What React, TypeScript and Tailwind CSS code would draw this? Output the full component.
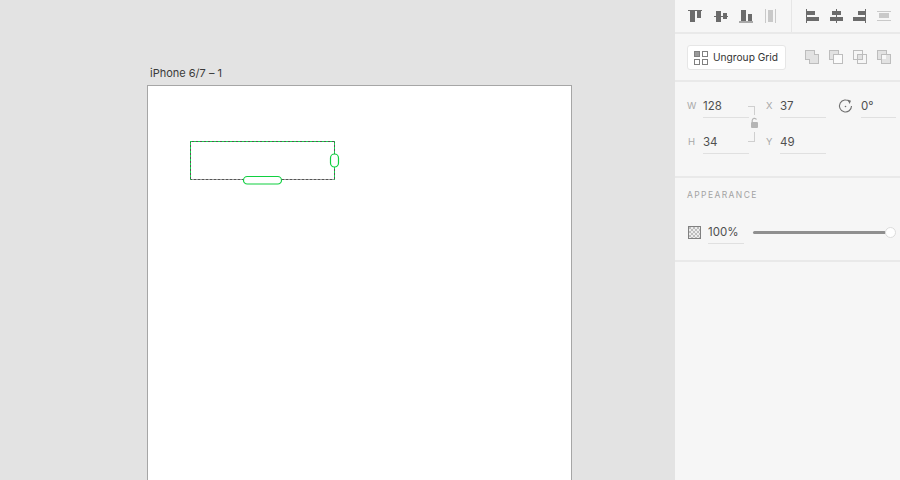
import React from "react";

const dark = "#6b6b6b";
const light = "#c9c9c9";

function AlignIcon({ children }: { children: React.ReactNode }) {
  return (
    <svg width="24" height="32" viewBox="0 0 24 32" className="shrink-0" shapeRendering="crispEdges">
      {children}
    </svg>
  );
}

function BoolIcon({ children }: { children: React.ReactNode }) {
  return (
    <svg width="15" height="15" viewBox="0 0 15 15" className="shrink-0" shapeRendering="crispEdges">
      {children}
    </svg>
  );
}

function Field({ value, width, className = "" }: { value: string; width: string; className?: string }) {
  return (
    <div className={`${width} h-[25px] border-b border-[#e0e0e0] text-[11.5px] leading-[26px] text-[#4f4f4f] ${className}`}>
      {value}
    </div>
  );
}

export default function App() {
  return (
    <div className="flex h-[480px] w-[900px] overflow-hidden font-['Inter','Liberation_Sans',sans-serif]">
      {/* Canvas */}
      <div className="h-full w-[675px] shrink-0 bg-[#e3e3e3] pl-[147px] pt-[66px]">
        <div className="pl-[3px] text-[11px] leading-[14px] text-[#3a3a3a]">iPhone 6/7 – 1</div>
        <div className="relative mt-[5px] h-[420px] w-[425px] border border-[#a6a6a6] bg-white">
          <svg className="absolute left-[36px] top-[49px]" width="160" height="50" viewBox="0 0 160 50" shapeRendering="crispEdges">
            <rect x="6.5" y="6.5" width="144" height="38" fill="none" stroke="#555555" />
            <line x1="6" y1="6.5" x2="151" y2="6.5" stroke="#14d84a" strokeDasharray="2 2" />
            <line x1="6.5" y1="8" x2="6.5" y2="45" stroke="#14d84a" strokeDasharray="2 2" />
            <line x1="150.5" y1="8" x2="150.5" y2="45" stroke="#14d84a" strokeDasharray="2 2" />
            <line x1="8" y1="44.5" x2="150" y2="44.5" stroke="#9a9a9a" strokeDasharray="2 2" />
            <rect x="59.5" y="41.5" width="38" height="7.5" rx="3.75" fill="#fff" stroke="#10d040" shapeRendering="auto" strokeWidth="1.2" />
            <rect x="146.5" y="19" width="8" height="13" rx="4" fill="#fff" stroke="#10d040" shapeRendering="auto" strokeWidth="1.2" />
          </svg>
        </div>
      </div>

      {/* Inspector */}
      <div className="flex h-full w-[225px] shrink-0 flex-col bg-[#f6f6f6] bg-[radial-gradient(#fcfcfc_0.6px,transparent_0.6px)] bg-[length:4px_4px]">
        {/* Align row */}
        <div className="flex h-[34px] shrink-0 items-start border-b-2 border-[#e9e9e9] pl-[8px]">
          <AlignIcon>
            <rect x="5" y="10" width="14" height="1" fill={dark} />
            <rect x="7" y="11" width="5" height="11" fill={dark} />
            <rect x="14" y="11" width="4" height="7" fill={dark} />
          </AlignIcon>
          <div className="ml-[2px]">
            <AlignIcon>
              <rect x="5" y="16" width="14" height="1" fill={dark} />
              <rect x="7" y="11" width="5" height="11" fill={dark} />
              <rect x="14" y="13" width="4" height="6" fill={dark} />
            </AlignIcon>
          </div>
          <div className="ml-[1px]">
            <AlignIcon>
              <rect x="5" y="21" width="14" height="2" fill="#a9a9a9" />
              <rect x="7" y="10" width="5" height="11" fill={dark} />
              <rect x="14" y="14" width="4" height="7" fill={dark} />
            </AlignIcon>
          </div>
          <AlignIcon>
            <rect x="7" y="9" width="1" height="14" fill={light} />
            <rect x="17" y="9" width="1" height="14" fill={light} />
            <rect x="10" y="10" width="5" height="12" fill={light} />
          </AlignIcon>
          <div className="ml-[9px] h-[32px] w-px bg-[#e6e6e6]" />
          <div className="ml-[8px]">
            <AlignIcon>
              <rect x="6" y="9" width="1" height="14" fill={dark} />
              <rect x="7" y="11" width="8" height="4" fill={dark} />
              <rect x="7" y="17" width="12" height="4" fill={dark} />
            </AlignIcon>
          </div>
          <AlignIcon>
            <rect x="12" y="9" width="1" height="14" fill={dark} />
            <rect x="8" y="11" width="9" height="4" fill={dark} />
            <rect x="6" y="17" width="13" height="4" fill={dark} />
          </AlignIcon>
          <AlignIcon>
            <rect x="17" y="9" width="1" height="14" fill={dark} />
            <rect x="10" y="11" width="7" height="4" fill={dark} />
            <rect x="5" y="17" width="12" height="4" fill={dark} />
          </AlignIcon>
          <AlignIcon>
            <rect x="5" y="11" width="14" height="1" fill={light} />
            <rect x="5" y="20" width="14" height="1" fill={light} />
            <rect x="7" y="13" width="10" height="5" fill={light} />
          </AlignIcon>
        </div>

        {/* Grid row */}
        <div className="flex h-[48px] shrink-0 items-center border-b-2 border-[#e9e9e9] pl-[12px]">
          <div className="mt-px flex h-[25px] w-[99px] items-center rounded-[3px] border border-[#e6e6e6] bg-white pl-[6px] text-[10.2px] text-[#333]">
            <svg width="14" height="14" viewBox="0 0 14 14" shapeRendering="crispEdges" className="mr-[5px] shrink-0">
              <rect x="0.5" y="0.5" width="5" height="5" fill="#9a9a9a" stroke="#808080" />
              <rect x="8.5" y="0.5" width="5" height="5" fill="none" stroke="#808080" />
              <rect x="0.5" y="8.5" width="5" height="5" fill="none" stroke="#808080" />
              <rect x="8.5" y="8.5" width="5" height="5" fill="none" stroke="#808080" />
            </svg>
            Ungroup Grid
          </div>
          <div className="ml-[19px] flex gap-[9px]">
            <BoolIcon>
              <path d="M0.5 0.5H9.5V4.5H13.5V13.5H4.5V9.5H0.5Z" fill="#e2e2e2" stroke="#bdbdbd" />
            </BoolIcon>
            <BoolIcon>
              <rect x="0.5" y="0.5" width="9" height="9" fill="#e2e2e2" stroke="#bdbdbd" />
              <rect x="4.5" y="4.5" width="9" height="9" fill="#fbfbfb" stroke="#bdbdbd" />
            </BoolIcon>
            <BoolIcon>
              <rect x="0.5" y="0.5" width="9" height="9" fill="none" stroke="#bdbdbd" />
              <rect x="4.5" y="4.5" width="9" height="9" fill="none" stroke="#bdbdbd" />
              <rect x="5" y="5" width="4" height="4" fill="#e2e2e2" />
            </BoolIcon>
            <BoolIcon>
              <rect x="0.5" y="0.5" width="9" height="9" fill="#e2e2e2" stroke="#bdbdbd" />
              <rect x="4.5" y="4.5" width="9" height="9" fill="#e2e2e2" stroke="#bdbdbd" />
              <rect x="5" y="5" width="4" height="4" fill="#f8f8f8" />
            </BoolIcon>
          </div>
        </div>

        {/* Transform */}
        <div className="h-[96px] shrink-0 border-b-2 border-[#e9e9e9] pl-[12px] pt-[11px]">
          <div className="flex h-[25px]">
            <div className="w-[16px] text-[9.5px] leading-[26px] text-[#a8a8a8]">W</div>
            <Field value="128" width="w-[46px]" />
            <div className="relative w-[31px] pl-[17px] text-[9.5px] leading-[26px] text-[#a8a8a8]">
              <svg className="absolute -left-[2px] top-[13px]" width="14" height="44" viewBox="0 0 14 44">
                <path d="M1 0.5H7.5V9M7.5 26V35.5H1" fill="none" stroke="#cfcfcf" shapeRendering="crispEdges" />
                <path d="M5.2 16V14.5A2.3 2.3 0 0 1 9.5 13.5" fill="none" stroke="#b5b5b5" strokeWidth="1.2" />
                <rect x="4" y="16" width="7" height="6" rx="1" fill="#b5b5b5" />
              </svg>
              X
            </div>
            <Field value="37" width="w-[46px]" />
            <svg width="15" height="15" viewBox="0 0 15 15" className="ml-[12px] mt-[6px] shrink-0">
              <path d="M11.6 2.6A6 6 0 1 0 13.5 7" fill="none" stroke="#6f6f6f" strokeWidth="1.1" />
              <path d="M9.4 0.6L13 1.8L11.6 5Z" fill="#6f6f6f" />
              <circle cx="7.5" cy="7.5" r="0.8" fill="#6f6f6f" />
            </svg>
            <Field value="0°" width="w-[35px]" className="ml-[8px]" />
          </div>
          <div className="mt-[11px] flex h-[25px]">
            <div className="w-[16px] pl-px text-[9.5px] leading-[26px] text-[#a8a8a8]">H</div>
            <Field value="34" width="w-[46px]" />
            <div className="w-[31px] pl-[17px] text-[9.5px] leading-[26px] text-[#a8a8a8]">Y</div>
            <Field value="49" width="w-[46px]" />
          </div>
        </div>

        {/* Appearance */}
        <div className="h-[84px] shrink-0 border-b-2 border-[#e9e9e9] pl-[12px] pt-[11px]">
          <div className="text-[8.5px] leading-[12px] tracking-[1.4px] text-[#a3a3a3]">APPEARANCE</div>
          <div className="mt-[18px] flex items-start">
            <svg width="13" height="13" viewBox="0 0 13 13" className="ml-px mt-[7px] shrink-0" shapeRendering="crispEdges">
              <rect x="0.5" y="0.5" width="12" height="12" fill="#ececec" stroke="#808080" />
              <path d="M1 1h2v2H1zM5 1h2v2H5zM9 1h2v2H9zM3 3h2v2H3zM7 3h2v2H7zM11 3h1v2h-1zM1 5h2v2H1zM5 5h2v2H5zM9 5h2v2H9zM3 7h2v2H3zM7 7h2v2H7zM11 7h1v2h-1zM1 9h2v2H1zM5 9h2v2H5zM9 9h2v2H9zM3 11h2v1H3zM7 11h2v1H7zM11 11h1v1h-1z" fill="#bdbdbd" />
            </svg>
            <Field value="100%" width="w-[36px]" className="ml-[7px]" />
            <div className="relative ml-[9px] mt-[12px] h-[3px] w-[133px] rounded-full bg-[#8f8f8f]">
              <div className="absolute -right-[10px] -top-[4px] h-[11px] w-[11px] rounded-full border border-[#dcdcdc] bg-white" />
            </div>
          </div>
        </div>
        <div className="flex-1" />
      </div>
    </div>
  );
}
